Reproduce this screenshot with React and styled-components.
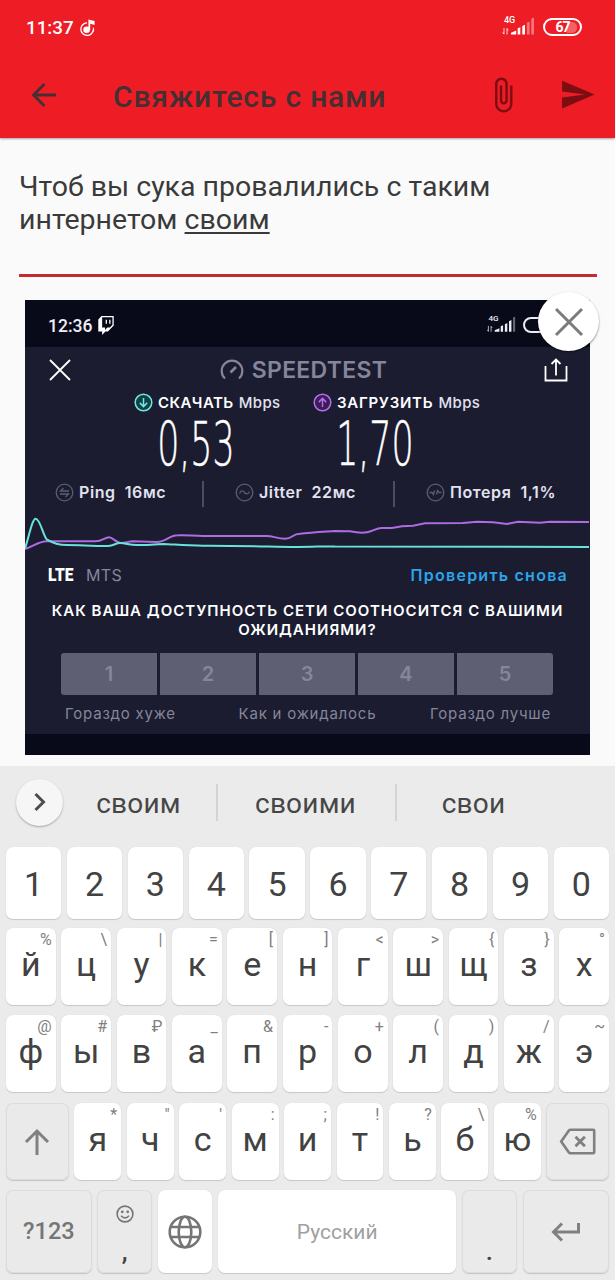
import React from "react";
import styled, { createGlobalStyle } from "styled-components";

const numberRow = ["1", "2", "3", "4", "5", "6", "7", "8", "9", "0"];
const topRow = [
  ["й", "%"], ["ц", "\\"], ["у", "|"], ["к", "="], ["е", "["], ["н", "]"],
  ["г", "<"], ["ш", ">"], ["щ", "{"], ["з", "}"], ["х", "°"],
];
const homeRow = [
  ["ф", "@"], ["ы", "#"], ["в", "₽"], ["а", "_"], ["п", "&"], ["р", "-"],
  ["о", "+"], ["л", "("], ["д", ")"], ["ж", "/"], ["э", "~"],
];
const bottomRow = [
  ["я", "*"], ["ч", '"'], ["с", "'"], ["м", ":"], ["и", ";"],
  ["т", "!"], ["ь", "?"], ["б", "\\"], ["ю", "%"],
];

const downloadLine =
  "M0 33.3 C4 22 7 3.7 10.7 3.7 C15 3.7 18 20 21.7 24.3 C27 27.5 33 30 41.7 30 C56 30 65 31 83 31 C89 30.5 91 28 95 28 C101 28 104 30 111.7 30 C125 30.5 130 29 138 29 C150 29.5 160 30.5 178 30.7 C210 30.5 240 31.5 272 32 C290 32 300 31 310 31.5 C330 32 350 32 564 32";
const uploadLine =
  "M0 34 C8 31 15 26.3 21.7 26.3 L70 26.3 C77 26.5 80 22.3 84 22.3 C88 22.3 91 28 96 28 C101 28 103 26.3 108 26.3 L132 27 C141 27 144 20.3 153 20.3 C162 19.8 168 21 178 21 L241 21 C249 21 252 23.7 260 23.7 C268 23.7 267 18.8 275 18.8 C285 17.5 295 17 310 16 L325 16.3 C333 18 336 18.5 342 17.3 C348 16 352 12.8 357 13 L367 13 L377 11.3 L388 10.7 L400 8.3 L438 8 L452 6.7 L468 7.2 L482 9 L493 6.7 L515 7.7 L525 6.7 L564 7";

const Signal = ({ bars }) => (
  <svg width="32" height="20" viewBox="0 0 32 20" fill="currentColor">
    <path d="M2 11v6M0.8 15.3 2 17.2M5 17.5v-6M5 11.5l1.2 1.8" stroke="currentColor" strokeWidth="1" fill="none" opacity=".8" />
    <path d="M9 17.5v-1.8l5.2-2.2v4z" />
    <path d="M15.700 17.500v-6.200l2.600-1.100v7.300z" />
    <path d="M20.300 17.500V9.100l2.700-1.300v9.700z" />
    <path d="M24.900 17.500V5.800l2.700-1.300v13z" opacity={bars > 3 ? 1 : 0.4} />
    <path d="M29.300 17.500V1.800L32 .5v17z" opacity="0.4" />
  </svg>
);

const PhoneStatus = () => (
  <StatusBar>
    <Clock>
      11:37
      <svg width="17" height="18" viewBox="0 0 17 18">
        <path d="M8 4.3a6.3 6.3 0 1 0 6.4 6.5" transform="translate(0 -.5)" fill="none" stroke="#fff" strokeWidth="1.3" />
        <path d="M14.5 12.5a7 7 0 0 0-.3-4" fill="none" stroke="#fff" strokeWidth="1" />
        <circle cx="7.6" cy="10.7" r="3.3" fill="#fff" />
        <path d="M9.4 11V.5l6.2 1.6v3.8l-4.4-1.2V11z" fill="#fff" />
      </svg>
    </Clock>
    <StatusRight>
      <Network>
        <small>4G</small>
        <Signal bars={3} />
      </Network>
      <Battery>
        <span>67</span>
      </Battery>
    </StatusRight>
  </StatusBar>
);

const Speedtest = () => (
  <Shot>
    <ShotStatus>
      <ShotClock>
        12:36
        <svg width="18" height="19" viewBox="0 0 24 24" preserveAspectRatio="none" fill="#fff">
          <path d="M11.571 4.714h1.715v5.143H11.57zm4.715 0H18v5.143h-1.714zM6 0L1.714 4.286v15.428h5.143V24l4.286-4.286h3.428L22.286 12V0zm14.571 11.143l-3.428 3.428h-3.429l-3 3v-3H6.857V1.714h13.714Z" />
        </svg>
      </ShotClock>
      <ShotRight>
        <Network $small>
          <small>4G</small>
          <Signal bars={4} />
        </Network>
        <Battery $small>
          <span>1</span>
        </Battery>
      </ShotRight>
    </ShotStatus>

    <TestHeader>
      <svg width="22" height="22" viewBox="0 0 22 22" stroke="#fff" strokeWidth="1.8">
        <path d="M1 1l20 20M21 1L1 21" />
      </svg>
      <Logo>
        <svg width="24" height="22" viewBox="0 0 24 22" fill="none" stroke="#85869b" strokeWidth="2.2">
          <path d="M5 19.5A10.3 10.3 0 1 1 19 19.5" />
          <path d="M10.5 13.5 16 8" strokeWidth="2.6" />
        </svg>
        SPEEDTEST
      </Logo>
      <svg width="24" height="24" viewBox="0 0 24 24" fill="none" stroke="#fff" strokeWidth="1.8">
        <path d="M1.5 8v14.5h21V8M12 17.500V2M7.500 6 12 1.500 16.500 6" />
      </svg>
    </TestHeader>

    <Results>
      <Result>
        <ResultLabel $spacing="0.45px">
          <svg width="19" height="19" viewBox="0 0 19 19" fill="#123f48" stroke="#6fe9dc" strokeWidth="1.5">
            <circle cx="9.500" cy="9.500" r="8.300" />
            <path d="M9.500 5v8.500M5.800 9.900l3.700 3.700 3.700-3.700" fill="none" />
          </svg>
          <b>СКАЧАТЬ</b> Mbps
        </ResultLabel>
        <Speed>0,53</Speed>
      </Result>
      <Result>
        <ResultLabel $spacing="0.75px">
          <svg width="19" height="19" viewBox="0 0 19 19" fill="#3b1d57" stroke="#b86ee8" strokeWidth="1.5">
            <circle cx="9.500" cy="9.500" r="8.300" />
            <path d="M9.500 14V5.500M5.800 9.100l3.700-3.700 3.700 3.700" fill="none" />
          </svg>
          <b>ЗАГРУЗИТЬ</b> Mbps
        </ResultLabel>
        <Speed>1,70</Speed>
      </Result>
    </Results>

    <Stats>
      <Stat $width="111px">
        <StatIcon viewBox="0 0 19 19">
          <circle cx="9.500" cy="9.500" r="8.300" />
          <path d="M14 8H5.500L8.500 5M5 11h8.500l-3 3" />
        </StatIcon>
        <span>Ping</span> 16мс
      </Stat>
      <Divider />
      <Stat $width="122px">
        <StatIcon viewBox="0 0 19 19">
          <circle cx="9.500" cy="9.500" r="8.300" />
          <path d="M4.500 10.500c1.500-3.500 3.500-3 5-1s3.500 2 5-1" />
        </StatIcon>
        <span>Jitter</span> 22мс
      </Stat>
      <Divider />
      <Stat $width="132px">
        <StatIcon viewBox="0 0 19 19">
          <circle cx="9.500" cy="9.500" r="8.300" />
          <path d="M3.500 9.500H6l1.500 2 1-4M10.500 11.500l1-4 1.500 2h2.500" />
        </StatIcon>
        <span>Потеря</span> 1,1%
      </Stat>
    </Stats>

    <Chart viewBox="0 0 565 38">
      <path d={uploadLine} stroke="#ae6be2" />
      <path d={downloadLine} stroke="#68e3d8" />
    </Chart>

    <Provider>
      <b>LTE</b>
      <span>MTS</span>
      <a>Проверить снова</a>
    </Provider>

    <Question>
      КАК ВАША ДОСТУПНОСТЬ СЕТИ СООТНОСИТСЯ С ВАШИМИ
      <br />
      ОЖИДАНИЯМИ?
    </Question>

    <Scale>
      {[1, 2, 3, 4, 5].map((n) => (
        <Mark key={n}>{n}</Mark>
      ))}
    </Scale>
    <ScaleLabels>
      <span>Гораздо хуже</span>
      <span>Как и ожидалось</span>
      <span>Гораздо лучше</span>
    </ScaleLabels>
    <ShotFooter />
  </Shot>
);

const LetterKeys = ({ keys }) =>
  keys.map(([letter, hint]) => (
    <Key key={letter}>
      <Hint>{hint}</Hint>
      {letter}
    </Key>
  ));

const Keyboard = () => (
  <KeyboardArea>
    <Suggestions>
      <Expand>
        <svg width="14" height="20" viewBox="0 0 14 20" fill="none" stroke="#4d4d4d" strokeWidth="3">
          <path d="M2.500 2 10.500 10 2.500 18" />
        </svg>
      </Expand>
      <Word $width="153px">своим</Word>
      <Word $width="179px">своими</Word>
      <Word $width="157px">свои</Word>
    </Suggestions>

    <KeyRow $height="72px" $gap="9.300px">
      {numberRow.map((n) => (
        <Key key={n} $digit>{n}</Key>
      ))}
    </KeyRow>
    <KeyRow $height="77px" $gap="10px">
      <LetterKeys keys={topRow} />
    </KeyRow>
    <KeyRow $height="77px" $gap="11px">
      <LetterKeys keys={homeRow} />
    </KeyRow>
    <KeyRow $height="77px" $gap="10px">
      <Key $gray $width="62.700px">
        <svg width="26" height="28" viewBox="0 0 26 28" fill="none" stroke="#808080" strokeWidth="3">
          <path d="M13 27V3M2 14 13 3l11 11" />
        </svg>
      </Key>
      <LetterKeys keys={bottomRow} />
      <Key $gray $width="62.700px">
        <svg width="37" height="27" viewBox="0 0 37 27" fill="none" stroke="#808080" strokeWidth="2.600">
          <path d="M11.500 1.800h22.700q1 0 1 1v21.400q0 1-1 1H11.500q-1 0-1.600-.8L2.200 13.500 9.900 2.600q.6-.8 1.600-.8z" />
          <path d="m16.500 8.800 9.400 9.400M25.900 8.800l-9.400 9.400" strokeWidth="2.800" />
        </svg>
      </Key>
    </KeyRow>
    <KeyRow $height="83px">
      <Key $gray $width="85.700px" $mode>?123</Key>
      <Key $gray $width="54.800px" $stacked>
        <svg width="18" height="18" viewBox="0 0 18 18" fill="none" stroke="#757575" strokeWidth="1.600">
          <circle cx="9" cy="9" r="7.900" />
          <path d="M5 10.800q4 4.200 8 0" />
          <circle cx="6.300" cy="6.800" r=".6" fill="#757575" />
          <circle cx="11.700" cy="6.800" r=".6" fill="#757575" />
        </svg>
        <span>,</span>
      </Key>
      <Key $width="54.800px">
        <svg width="34" height="34" viewBox="0 0 34 34" fill="none" stroke="#757575" strokeWidth="2.600">
          <circle cx="17" cy="17" r="15.300" />
          <ellipse cx="17" cy="17" rx="6.300" ry="15.300" />
          <path d="M3 12h28M3 22h28" />
        </svg>
      </Key>
      <Key $space>Русский</Key>
      <Key $gray $width="55.300px" $stacked>
        <span>.</span>
      </Key>
      <Key $gray $width="86.300px">
        <svg width="30" height="20" viewBox="0 0 30 20" fill="none" stroke="#808080" strokeWidth="3">
          <path d="M27.500 1v9H3M11 1.500 2.500 10l8.500 8.500" />
        </svg>
      </Key>
    </KeyRow>
  </KeyboardArea>
);

const App = () => (
  <>
    <GlobalStyle />
    <Screen>
      <Header>
        <PhoneStatus />
        <AppBar>
          <svg width="26" height="26" viewBox="0 0 26 26" fill="none" stroke="#443032" strokeWidth="2.800">
            <path d="M25 13H3M13.500 2 2.500 13l11 11" />
          </svg>
          <h1>Свяжитесь с нами</h1>
          <svg width="38" height="38" viewBox="0 0 24 24" fill="#7b0d13">
            <path d="M16.500 6v11.500c0 2.210-1.790 4-4 4s-4-1.790-4-4V5c0-1.380 1.120-2.500 2.500-2.500s2.500 1.120 2.500 2.500v10.500c0 .55-.45 1-1 1s-1-.45-1-1V6H10v9.500c0 1.380 1.120 2.500 2.500 2.500s2.500-1.120 2.500-2.500V5c0-2.210-1.790-4-4-4S7 2.790 7 5v12.500c0 3.040 2.460 5.500 5.500 5.500s5.500-2.460 5.500-5.500V6h-1.500z" />
          </svg>
          <svg width="37" height="37" viewBox="0 0 24 24" fill="#7b0d13">
            <path d="M2.010 21L23 12 2.010 3 2 10l15 2-15 2z" />
          </svg>
        </AppBar>
      </Header>
      <Message>
        Чтоб вы сука провалились с таким
        <br />
        интернетом <u>своим</u>
      </Message>
      <Attachment>
        <Speedtest />
        <Remove>
          <svg width="30" height="30" viewBox="0 0 30 30" stroke="#7b7b7b" strokeWidth="3">
            <path d="M2 2l26 26M28 2 2 28" />
          </svg>
        </Remove>
      </Attachment>
      <Keyboard />
    </Screen>
  </>
);

const GlobalStyle = createGlobalStyle`
  * {
    box-sizing: border-box;
  }
  body {
    margin: 0;
    background: #fafafa;
    font-family: Roboto, "Noto Sans", sans-serif;
  }
  svg {
    display: block;
    flex-shrink: 0;
  }
`;

const Screen = styled.div`
  display: flex;
  flex-direction: column;
  width: 615px;
  height: 1280px;
  overflow: hidden;
  background: #fafafa;
`;
const Header = styled.header`
  height: 138px;
  background: #ee1c25;
  box-shadow: 0 1px 2px rgba(0, 0, 0, 0.35);
`;
const StatusBar = styled.div`
  display: flex;
  justify-content: space-between;
  height: 54px;
  padding: 0 33px 0 26px;
  color: #fff;
`;
const Clock = styled.div`
  display: flex;
  align-items: center;
  gap: 5px;
  padding-top: 1px;
  font-size: 18.800px;
  font-weight: 500;
`;
const StatusRight = styled.div`
  display: flex;
  align-items: center;
  gap: 9px;
`;
const Network = styled.div`
  position: relative;
  transform: ${({ $small }) => ($small ? "scale(0.9)" : "none")};
  small {
    position: absolute;
    left: 2px;
    top: -2px;
    font-size: 9px;
    font-weight: 500;
    line-height: 10px;
  }
`;
const Battery = styled.div`
  display: flex;
  align-items: center;
  justify-content: center;
  width: ${({ $small }) => ($small ? "35px" : "39px")};
  height: ${({ $small }) => ($small ? "16px" : "18px")};
  border: 2px solid currentColor;
  border-radius: 9px;
  font-size: 14px;
  font-weight: 700;
  letter-spacing: -1px;
  span {
    display: flex;
    align-items: center;
    justify-content: center;
    width: 29px;
    height: 11px;
    border-radius: 5px;
    background: linear-gradient(90deg, transparent 64%, rgba(255, 255, 255, 0.3) 64%);
  }
`;
const AppBar = styled.div`
  display: flex;
  align-items: center;
  height: 81px;
  padding: 0 19px 0 31px;
  h1 {
    flex: 1;
    margin: 3px 0 0 56px;
    color: #443032;
    font-size: 30px;
    font-weight: 500;
    letter-spacing: 0.8px;
  }
  svg + svg {
    margin-left: 37px;
  }
`;
const Message = styled.div`
  height: 139px;
  margin: 0 18px 0 19px;
  padding-top: 32px;
  border-bottom: 3px solid #c52a30;
  color: #3a3a3a;
  font-size: 28.500px;
  line-height: 33px;
  u {
    text-decoration-thickness: 2px;
    text-underline-offset: 3px;
    text-decoration-skip-ink: none;
  }
`;
const Attachment = styled.div`
  position: relative;
  width: 565px;
  margin: 23px 0 0 25px;
`;
const Remove = styled.div`
  position: absolute;
  top: -8px;
  right: -9px;
  display: flex;
  align-items: center;
  justify-content: center;
  width: 61px;
  height: 59px;
  border-radius: 50%;
  background: #fff;
  box-shadow: 0 1px 2px rgba(0, 0, 0, 0.5);
`;

const Shot = styled.div`
  display: flex;
  flex-direction: column;
  height: 455px;
  overflow: hidden;
  background: #1b1c2f;
  color: #fff;
  font-family: Inter, "Noto Sans", sans-serif;
`;
const ShotStatus = styled.div`
  display: flex;
  justify-content: space-between;
  height: 47px;
  padding: 3px 32px 0 23px;
  background: #090a19;
  color: #ededf5;
  font-family: Roboto, sans-serif;
`;
const ShotClock = styled(Clock)`
  gap: 5px;
  font-size: 17.500px;
`;
const ShotRight = styled(StatusRight)`
  gap: 6px;
`;
const TestHeader = styled.div`
  display: flex;
  align-items: center;
  justify-content: space-between;
  height: 46px;
  padding: 0 22px 0 24px;
`;
const Logo = styled.div`
  display: flex;
  align-items: center;
  gap: 8px;
  margin-right: 8px;
  color: #85869b;
  font-size: 23px;
  font-weight: 600;
  letter-spacing: 0.300px;
`;
const Results = styled.div`
  display: flex;
  height: 84px;
  padding-left: 109px;
`;
const Result = styled.div`
  width: 179px;
`;
const ResultLabel = styled.div`
  display: flex;
  align-items: center;
  gap: 5px;
  height: 19px;
  color: #e2e2f0;
  font-size: 15px;
  font-weight: 500;
  letter-spacing: 0.4px;
  white-space: nowrap;
  b {
    color: #fff;
    font-weight: 600;
    letter-spacing: ${({ $spacing }) => $spacing};
  }
`;
const Speed = styled.div`
  width: 124px;
  height: 60px;
  margin-top: 2px;
  font-family: "DejaVu Sans", "DejaVu Sans Light", sans-serif;
  font-size: 60px;
  font-weight: 200;
  line-height: 60px;
  text-align: center;
  text-indent: -5px;
  transform: scaleX(0.58);
  -webkit-text-stroke: 0.5px #fff;
`;
const Stats = styled.div`
  display: flex;
  height: 38px;
  padding-left: 30px;
`;
const Stat = styled.div`
  display: flex;
  align-items: center;
  gap: 5px;
  width: ${({ $width }) => $width};
  height: 30px;
  color: #e2e2f0;
  font-size: 16px;
  font-weight: 600;
  letter-spacing: 0.6px;
  white-space: nowrap;
  span {
    margin-right: 4px;
  }
`;
const Divider = styled.div`
  width: 2px;
  height: 26px;
  margin: 4px 31px 0 36px;
  background: #4c4d60;
`;
const StatIcon = styled.svg`
  width: 19px;
  height: 19px;
  fill: none;
  stroke: #5c5d72;
  stroke-width: 1.300;
`;
const Chart = styled.svg`
  width: 565px;
  height: 38px;
  fill: none;
  stroke-width: 2;
`;
const Provider = styled.div`
  display: flex;
  align-items: baseline;
  height: 48px;
  padding: 10px 22px 0 23px;
  font-size: 16px;
  b {
    width: 26px;
    font-family: Roboto, sans-serif;
    font-size: 19px;
    font-weight: 900;
    transform: scaleX(0.82);
    transform-origin: left;
  }
  span {
    flex: 1;
    margin-left: 12px;
    color: #85869b;
    letter-spacing: 0.4px;
  }
  a {
    color: #2aa5ea;
    font-weight: 600;
    letter-spacing: 1.250px;
  }
`;
const Question = styled.div`
  height: 52px;
  font-size: 15px;
  font-weight: 600;
  letter-spacing: 1.020px;
  line-height: 19px;
  text-align: center;
  white-space: nowrap;
`;
const Scale = styled.div`
  display: flex;
  gap: 3px;
  width: 492px;
  height: 42px;
  margin-left: 36px;
  border-radius: 3px;
  overflow: hidden;
`;
const Mark = styled.div`
  display: flex;
  flex: 1;
  align-items: center;
  justify-content: center;
  background: #5e5f72;
  color: #85869b;
  font-size: 20px;
  font-weight: 600;
`;
const ScaleLabels = styled.div`
  display: flex;
  justify-content: space-between;
  padding: 9px 39px 0 40px;
  color: #85869b;
  font-size: 15px;
  letter-spacing: 0.780px;
  span:nth-child(2) {
    margin-left: 9px;
  }
`;
const ShotFooter = styled.div`
  height: 21px;
  margin-top: auto;
  background: #090a19;
`;

const KeyboardArea = styled.div`
  flex: 1;
  margin-top: 11px;
  background: #ebebeb;
`;
const Suggestions = styled.div`
  display: flex;
  align-items: center;
  height: 81px;
  padding: 0 0 9px 16px;
`;
const Expand = styled.div`
  display: flex;
  align-items: center;
  justify-content: center;
  width: 47px;
  height: 47px;
  border-radius: 50%;
  background: #f6f6f6;
  box-shadow: 0 1px 2px rgba(0, 0, 0, 0.3);
`;
const Word = styled.div`
  width: ${({ $width }) => $width};
  height: 37px;
  padding-right: 2px;
  color: #464646;
  font-size: 28px;
  letter-spacing: 0.2px;
  line-height: 39px;
  text-align: center;
  & + & {
    border-left: 2px solid #d4d4d4;
  }
`;
const KeyRow = styled.div`
  display: flex;
  gap: 5.600px;
  height: ${({ $height }) => $height};
  margin-bottom: ${({ $gap }) => $gap};
  padding: 0 6px;
`;
const Key = styled.div`
  position: relative;
  display: flex;
  flex: ${({ $width }) => ($width ? `0 0 ${$width}` : "1 1 0")};
  flex-direction: ${({ $stacked }) => ($stacked ? "column" : "row")};
  align-items: center;
  justify-content: ${({ $stacked }) => ($stacked ? "flex-end" : "center")};
  padding: ${({ $digit, $gray, $space, $width }) =>
    $digit ? "1px 0 0" : $space ? "2px 0 0" : $gray || $width ? "0" : "0 0 5px"};
  border-radius: 7px;
  background: ${({ $gray }) => ($gray ? "#eaeaea" : "#fff")};
  box-shadow: ${({ $gray }) =>
    $gray
      ? "inset 0 0 0 1px #dcdcdc, 0 1px 1px #c2c2c2"
      : "0 0 1px #cfcfcf, 0 1px 1px #c6c6c6"};
  color: ${({ $mode, $space }) => ($mode ? "#757575" : $space ? "#a0a0a0" : "#424242")};
  font-size: ${({ $mode, $space }) => ($mode ? "23.500px" : $space ? "21px" : "34px")};
  font-weight: ${({ $mode }) => ($mode ? 500 : 400)};
  line-height: 1;
  span {
    height: 40px;
    margin: 9px 0 1px;
    font-size: 26px;
    font-weight: 500;
    line-height: 38px;
  }
`;
const Hint = styled.small`
  position: absolute;
  top: 2px;
  right: 4px;
  color: #808080;
  font-size: 16px;
  line-height: 19px;
`;

export default App;
